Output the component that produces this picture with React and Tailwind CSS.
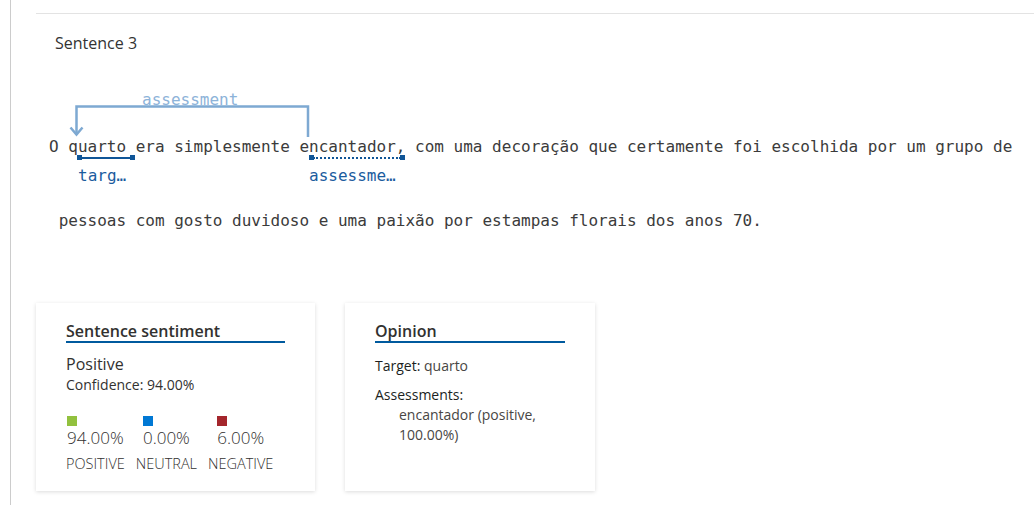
export default function App() {
  return (
    <div className="w-[1034px] h-[505px] bg-white overflow-hidden font-['Open_Sans',sans-serif] text-[#323130]">
      <div className="ml-[10px] h-full border-l border-[#cccccc] pl-[25px] pt-[13px]">
        <div className="border-t border-[#e3e3e3]">
          <div className="pl-[19px] pt-[18px] text-[16px] leading-[22px] text-[#333333]">Sentence 3</div>

          {/* Sentence line 1 */}
          <div className="relative ml-[13px] mt-[81px] whitespace-pre font-['DejaVu_Sans_Mono',monospace] text-[16px] leading-[24px] text-[#3b3b3b]">
            O quarto era simplesmente encantador, com uma decoração que certamente foi escolhida por um grupo de
            {/* assessment arc */}
            <svg className="absolute left-[11px] top-[-50px]" width="260" height="55" viewBox="0 0 260 55" fill="none">
              <path d="M248 52 V21.5 H16.5 V50" stroke="#7ea9d2" strokeWidth="2.5" />
              <path d="M10.5 42.5 L16.5 49.5 L22.5 42.5" stroke="#7ea9d2" strokeWidth="2.5" strokeLinejoin="miter" />
            </svg>
            <div className="absolute left-[93px] top-[-47px] text-[16px] leading-[24px] text-[#8db3d9]">assessment</div>

            {/* target underline */}
            <div className="absolute left-[28px] top-[20px] w-[58px] h-[5px]">
              <div className="absolute left-0 right-0 top-[1.5px] h-[2px] bg-[#0f5597]" />
              <div className="absolute left-0 top-0 w-[5px] h-[5px] bg-[#0f5597]" />
              <div className="absolute right-0 top-0 w-[5px] h-[5px] bg-[#0f5597]" />
            </div>
            <div className="absolute left-[29px] top-[29px] text-[16px] leading-[24px] text-[#1b5c9e]">targ…</div>

            {/* assessment underline */}
            <div className="absolute left-[260px] top-[20px] w-[96px] h-[5px]">
              <div className="absolute left-[4px] right-[4px] top-[1.5px] border-t-2 border-dotted border-[#0f5597]" />
              <div className="absolute left-0 top-0 w-[5px] h-[5px] bg-[#0f5597]" />
              <div className="absolute right-0 top-0 w-[5px] h-[5px] bg-[#0f5597]" />
            </div>
            <div className="absolute left-[260px] top-[29px] text-[16px] leading-[24px] text-[#1b5c9e]">assessme…</div>
          </div>

          {/* Sentence line 2 */}
          <div className="ml-[13px] mt-[50px] whitespace-pre font-['DejaVu_Sans_Mono',monospace] text-[16px] leading-[24px] text-[#3b3b3b]">
            {" pessoas com gosto duvidoso e uma paixão por estampas florais dos anos 70."}
          </div>

          {/* Cards */}
          <div className="mt-[70px] flex gap-[30px]">
            <div className="w-[279px] h-[188px] bg-white px-[30px] pt-[18px] shadow-[0_1px_4px_rgba(0,0,0,0.14)]">
              <div className="border-b-2 border-[#005a9e] text-[16px] leading-[20px] font-semibold text-[#323130]">Sentence sentiment</div>
              <div className="mt-[10px] text-[16px] leading-[22px]">Positive</div>
              <div className="mt-[1px] text-[14px] leading-[18px]">Confidence: 94.00%</div>
              <div className="mt-[22px] flex gap-[11px]">
                <div className="flex flex-col items-center">
                  <div className="flex flex-col items-start">
                    <div className="w-[10px] h-[10px] bg-[#92c13e]" />
                    <div className="text-[17px] leading-[24px] font-light">94.00%</div>
                  </div>
                  <div className="mt-[4px] text-[14.5px] leading-[20px] font-light">POSITIVE</div>
                </div>
                <div className="flex flex-col items-center">
                  <div className="flex flex-col items-start">
                    <div className="w-[10px] h-[10px] bg-[#0078d4]" />
                    <div className="text-[17px] leading-[24px] font-light">0.00%</div>
                  </div>
                  <div className="mt-[4px] text-[14.5px] leading-[20px] font-light">NEUTRAL</div>
                </div>
                <div className="flex flex-col items-center">
                  <div className="flex flex-col items-start">
                    <div className="w-[10px] h-[10px] bg-[#a4262c]" />
                    <div className="text-[17px] leading-[24px] font-light">6.00%</div>
                  </div>
                  <div className="mt-[4px] text-[14.5px] leading-[20px] font-light">NEGATIVE</div>
                </div>
              </div>
            </div>

            <div className="w-[250px] h-[188px] bg-white px-[30px] pt-[18px] shadow-[0_1px_4px_rgba(0,0,0,0.14)]">
              <div className="border-b-2 border-[#005a9e] text-[16px] leading-[20px] font-semibold text-[#323130]">Opinion</div>
              <div className="mt-[13px] text-[14px] leading-[20px] text-[#484644]">
                <span className="text-[#201f1e]">Target:</span> quarto
              </div>
              <div className="mt-[9px] text-[14px] leading-[20px] text-[#201f1e]">Assessments:</div>
              <div className="pl-[24px] text-[14px] leading-[20px] text-[#484644]">
                encantador (positive,
                <br />
                100.00%)
              </div>
            </div>
          </div>
        </div>
      </div>
    </div>
  );
}
